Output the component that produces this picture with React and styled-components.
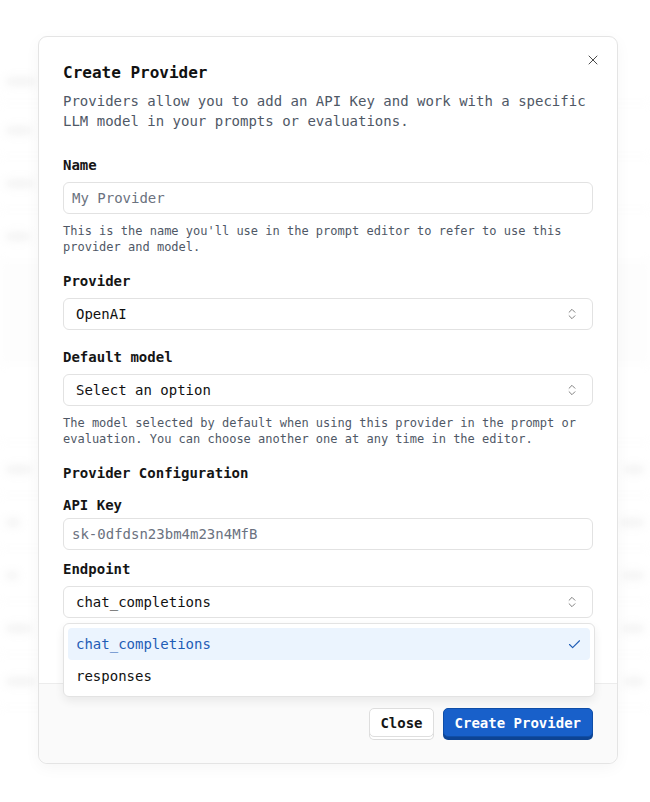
import React from "react";
import styled, { createGlobalStyle } from "styled-components";
import { ChevronsUpDown, Check, X } from "lucide-react";

const GlobalStyle = createGlobalStyle`
  html, body {
    margin: 0;
    padding: 0;
    background: #ffffff;
  }
  body {
    font-family: "DejaVu Sans Mono", "Liberation Mono", monospace;
    color: #111111;
  }
  * { box-sizing: border-box; }
`;

const mono = `"DejaVu Sans Mono", "Liberation Mono", monospace`;

const Page = styled.div`
  position: relative;
  width: 650px;
  height: 802px;
  overflow: hidden;
  background: #ffffff;
`;

// blurred app behind the dialog
const Backdrop = styled.div`
  display: flex;
  flex-direction: column;
  padding-top: 60px;
  filter: blur(4px);
  opacity: 0.5;
`;

const BgRow = styled.div`
  height: ${(p) => p.h || 53}px;
  border-bottom: 1px solid #ececec;
  display: flex;
  align-items: center;
  justify-content: space-between;
  padding: 0 6px;
  background: ${(p) => (p.shade ? "#f9f9f9" : "transparent")};
`;

const BgText = styled.span`
  display: block;
  width: ${(p) => p.w}px;
  height: 7px;
  border-radius: 3px;
  background: #cdcdcd;
`;

const Overlay = styled.div`
  position: absolute;
  inset: 0;
  background: rgba(255, 255, 255, 0.45);
  padding: 36px 0 0 38px;
`;

const Dialog = styled.div`
  position: relative;
  width: 580px;
  height: 728px;
  background: #ffffff;
  border: 1px solid #e4e4e4;
  border-radius: 9px;
  box-shadow: 0 4px 16px rgba(0, 0, 0, 0.04);
  display: flex;
  flex-direction: column;
`;

const CloseIcon = styled.button`
  position: absolute;
  top: 15px;
  right: 16px;
  border: 0;
  background: none;
  padding: 0;
  color: #4a4a4a;
  display: flex;
`;

const Body = styled.div`
  flex: 1;
  padding: 24px 24px 0 24px;
  display: flex;
  flex-direction: column;
`;

const Title = styled.h2`
  margin: 0;
  font-family: ${mono};
  font-size: 16px;
  line-height: 24px;
  font-weight: 700;
  color: #111;
`;

const Description = styled.p`
  margin: 6px 0 24px;
  font-size: 14px;
  line-height: 20px;
  color: #4f5866;
`;

const Field = styled.div`
  display: flex;
  flex-direction: column;
  margin-bottom: ${(p) => p.mb ?? 16}px;
`;

const Label = styled.label`
  font-size: 14px;
  line-height: 20px;
  font-weight: 700;
  color: #151515;
  margin-bottom: ${(p) => p.gap ?? 7}px;
`;

const SectionHeading = styled.div`
  font-size: 14px;
  line-height: 20px;
  font-weight: 700;
  color: #151515;
  margin-bottom: 12px;
`;

const Input = styled.input`
  height: 32px;
  width: 100%;
  border: 1px solid #e2e2e2;
  border-radius: 6px;
  padding: 0 8px;
  font-family: ${mono};
  font-size: 14px;
  color: #111;
  background: #fff;
  outline: none;
  &::placeholder {
    color: #6b7280;
  }
`;

const Hint = styled.p`
  margin: 9px 0 0;
  font-size: 12px;
  line-height: 16px;
  color: #4f5866;
`;

const SelectBox = styled.div`
  position: relative;
  height: 32px;
  border: 1px solid #e2e2e2;
  border-radius: 6px;
  padding: 0 13px 0 12px;
  display: flex;
  align-items: center;
  justify-content: space-between;
  font-size: 14px;
  color: #111;
  background: #fff;
  svg {
    color: #777;
  }
`;

const Menu = styled.div`
  position: absolute;
  top: 36px;
  left: -1px;
  right: -3px;
  background: #fff;
  border: 1px solid #e3e3e3;
  border-radius: 6px;
  padding: 4px;
  box-shadow: 0 4px 10px rgba(0, 0, 0, 0.07);
  z-index: 2;
`;

const Option = styled.div`
  height: 32px;
  border-radius: 4px;
  padding: 0 8px;
  display: flex;
  align-items: center;
  justify-content: space-between;
  font-size: 14px;
  color: ${(p) => (p.active ? "#1f5db6" : "#111")};
  background: ${(p) => (p.active ? "#ebf4fe" : "transparent")};
  svg {
    color: #1f5db6;
  }
`;

const Footer = styled.div`
  height: 80px;
  border-top: 1px solid #ececec;
  background: #fafafa;
  border-radius: 0 0 9px 9px;
  padding: 24px 24px 0;
  display: flex;
  justify-content: flex-end;
  gap: 9px;
`;

const Button = styled.button`
  height: 29px;
  padding: 0 ${(p) => (p.primary ? 11 : 10)}px;
  font-family: ${mono};
  font-size: 14px;
  font-weight: 700;
  border-radius: 5px;
  cursor: pointer;
  color: ${(p) => (p.primary ? "#ffffff" : "#151515")};
  background: ${(p) => (p.primary ? "#1860ca" : "#ffffff")};
  border: 1px solid ${(p) => (p.primary ? "#0f4ea8" : "#dedede")};
  box-shadow: ${(p) =>
    p.primary ? "0 3px 0 #0d4494" : "0 3px 0 -1px #ffffff, 0 3px 0 0 #dcdcdc"};
`;

const bgRows = [
  { w1: 30, w2: 0, h: 44 },
  { w1: 26, w2: 0 },
  { w1: 28, w2: 0 },
  { w1: 24, w2: 0 },
  { w1: 0, w2: 0, shade: true, h: 100 },
  { w1: 0, w2: 0, h: 80 },
  { w1: 26, w2: 20 },
  { w1: 14, w2: 24 },
  { w1: 12, w2: 22 },
  { w1: 26, w2: 22 },
  { w1: 30, w2: 20 },
];

export default function App() {
  return (
    <Page>
      <GlobalStyle />
      <Backdrop>
        {bgRows.map((r, i) => (
          <BgRow key={i} h={r.h} shade={r.shade}>
            <BgText w={r.w1} />
            <BgText w={r.w2} />
          </BgRow>
        ))}
      </Backdrop>

      <Overlay>
        <Dialog>
          <CloseIcon aria-label="Close">
            <X size={16} strokeWidth={1.5} />
          </CloseIcon>
          <Body>
            <Title>Create Provider</Title>
            <Description>
              Providers allow you to add an API Key and work with a specific
              LLM model in your prompts or evaluations.
            </Description>

            <Field>
              <Label>Name</Label>
              <Input placeholder="My Provider" />
              <Hint>
                This is the name you'll use in the prompt editor to refer to use
                this provider and model.
              </Hint>
            </Field>

            <Field mb={17}>
              <Label>Provider</Label>
              <SelectBox>
                <span>OpenAI</span>
                <ChevronsUpDown size={14} strokeWidth={1.6} />
              </SelectBox>
            </Field>

            <Field>
              <Label>Default model</Label>
              <SelectBox>
                <span>Select an option</span>
                <ChevronsUpDown size={14} strokeWidth={1.6} />
              </SelectBox>
              <Hint>
                The model selected by default when using this provider in the
                prompt or evaluation. You can choose another one at any time in
                the editor.
              </Hint>
            </Field>

            <SectionHeading>Provider Configuration</SectionHeading>

            <Field mb={9}>
              <Label gap={3}>API Key</Label>
              <Input placeholder="sk-0dfdsn23bm4m23n4MfB" />
            </Field>

            <Field mb={0}>
              <Label>Endpoint</Label>
              <SelectBox>
                <span>chat_completions</span>
                <ChevronsUpDown size={14} strokeWidth={1.6} />
                <Menu>
                  <Option active>
                    <span>chat_completions</span>
                    <Check size={15} strokeWidth={1.8} />
                  </Option>
                  <Option>
                    <span>responses</span>
                  </Option>
                </Menu>
              </SelectBox>
            </Field>
          </Body>
          <Footer>
            <Button>Close</Button>
            <Button primary>Create Provider</Button>
          </Footer>
        </Dialog>
      </Overlay>
    </Page>
  );
}
